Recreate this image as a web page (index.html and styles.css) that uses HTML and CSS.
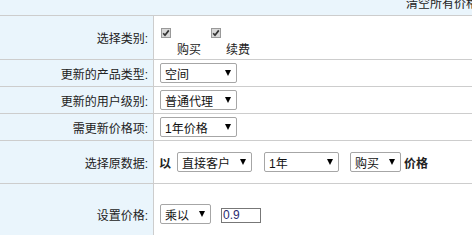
FILE: index.html
```html
<!DOCTYPE html>
<html>
<head>
<meta charset="utf-8">
<link rel="stylesheet" href="styles.css">
</head>
<body>
<div class="page">
  <div class="head"><span class="head-text">清空所有价格</span></div>

  <div class="row r1">
    <div class="lab">选择类别:</div>
    <div class="val checks">
      <span class="cb"><svg width="10" height="10" viewBox="0 0 10 10"><rect x="0.5" y="0.5" width="9" height="9" fill="#d8d8d8" stroke="#999"/><path d="M2.2 5.2 L4 7.2 L7.8 2.4" fill="none" stroke="#333" stroke-width="1.7"/></svg></span>
      <span class="cbl">购买</span>
      <span class="cb cb2"><svg width="10" height="10" viewBox="0 0 10 10"><rect x="0.5" y="0.5" width="9" height="9" fill="#d8d8d8" stroke="#999"/><path d="M2.2 5.2 L4 7.2 L7.8 2.4" fill="none" stroke="#333" stroke-width="1.7"/></svg></span>
      <span class="cbl">续费</span>
    </div>
  </div>

  <div class="row r2">
    <div class="lab">更新的产品类型:</div>
    <div class="val"><span class="sel w76"><span>空间</span><i class="arr"></i></span></div>
  </div>

  <div class="row r2">
    <div class="lab">更新的用户级别:</div>
    <div class="val"><span class="sel w76"><span>普通代理</span><i class="arr"></i></span></div>
  </div>

  <div class="row r2">
    <div class="lab">需更新价格项:</div>
    <div class="val"><span class="sel w76"><span>1年价格</span><i class="arr"></i></span></div>
  </div>

  <div class="row r5">
    <div class="lab">选择原数据:</div>
    <div class="val">
      <b class="yi">以</b>
      <span class="sel w75 g1"><span>直接客户</span><i class="arr"></i></span>
      <span class="sel w75 g2"><span>1年</span><i class="arr"></i></span>
      <span class="sel w51 g3"><span>购买</span><i class="arr"></i></span>
      <b class="jg">价格</b>
    </div>
  </div>

  <div class="row r6">
    <div class="lab">设置价格:</div>
    <div class="val">
      <span class="sel w51"><span>乘以</span><i class="arr"></i></span>
      <span class="inp">0.9</span>
    </div>
  </div>
</div>
</body>
</html>
```

FILE: styles.css
```css
html, body {
  margin: 0;
  padding: 0;
  overflow: hidden;
  background: #fff;
}
body {
  font-family: "Liberation Sans", "Noto Sans CJK SC", sans-serif;
  font-size: 12px;
  color: #222;
}
.page {
  width: 490px;
}
.head {
  height: 15px;
  background: #eaf5fc;
  border-bottom: 1px solid #cdcdcd;
  text-align: right;
  padding-right: 12px;
  overflow: hidden;
}
.head-text {
  display: block;
  line-height: 12px;
  margin-top: -2px;
}
.row {
  display: flex;
  border-bottom: 1px solid #cdcdcd;
}
.r1 { height: 43px; }
.r2 { height: 26px; }
.r5 { height: 42px; }
.r6 { height: 60px; }
.lab {
  width: 154px;
  flex: none;
  box-sizing: border-box;
  border-right: 1px solid #cdcdcd;
  background: #eaf5fc;
  display: flex;
  align-items: center;
  justify-content: flex-end;
  padding-right: 5px;
  white-space: nowrap;
}
.val {
  flex: 1;
  display: flex;
  align-items: center;
  padding-left: 6px;
  white-space: nowrap;
}
.checks {
  align-items: flex-start;
}
.cb {
  display: block;
  width: 10px;
  height: 10px;
  margin-top: 12px;
  margin-left: 1px;
}
.cb svg { display: block; }
.cb2 { margin-left: 10px; }
.cbl {
  margin-top: 27px;
  line-height: 14px;
  margin-left: 6px;
}
.cb2 + .cbl { margin-left: 5px; }
.sel {
  display: inline-flex;
  align-items: center;
  justify-content: space-between;
  box-sizing: border-box;
  height: 20px;
  border: 1px solid #a6a6a6;
  border-radius: 2px;
  background: #fff;
  padding: 0 5px 0 4px;
  color: #111;
}
.w76 { width: 77px; }
.w75 { width: 75px; }
.w51 { width: 51px; }
.arr {
  display: block;
  width: 0;
  height: 0;
  border-left: 3px solid transparent;
  border-right: 3px solid transparent;
  border-top: 6px solid #000;
}
.yi {
  margin-left: -1px;
  font-weight: bold;
}
.g1 { margin-left: 6px; }
.g2 { margin-left: 12px; }
.g3 { margin-left: 11px; }
.jg {
  margin-left: 3px;
  font-weight: bold;
}
.inp {
  display: inline-block;
  box-sizing: border-box;
  width: 40px;
  height: 15px;
  line-height: 13px;
  border: 1px solid #777;
  margin-left: 10px;
  margin-top: 2px;
  padding-left: 1px;
  color: #2a2a70;
}
```
